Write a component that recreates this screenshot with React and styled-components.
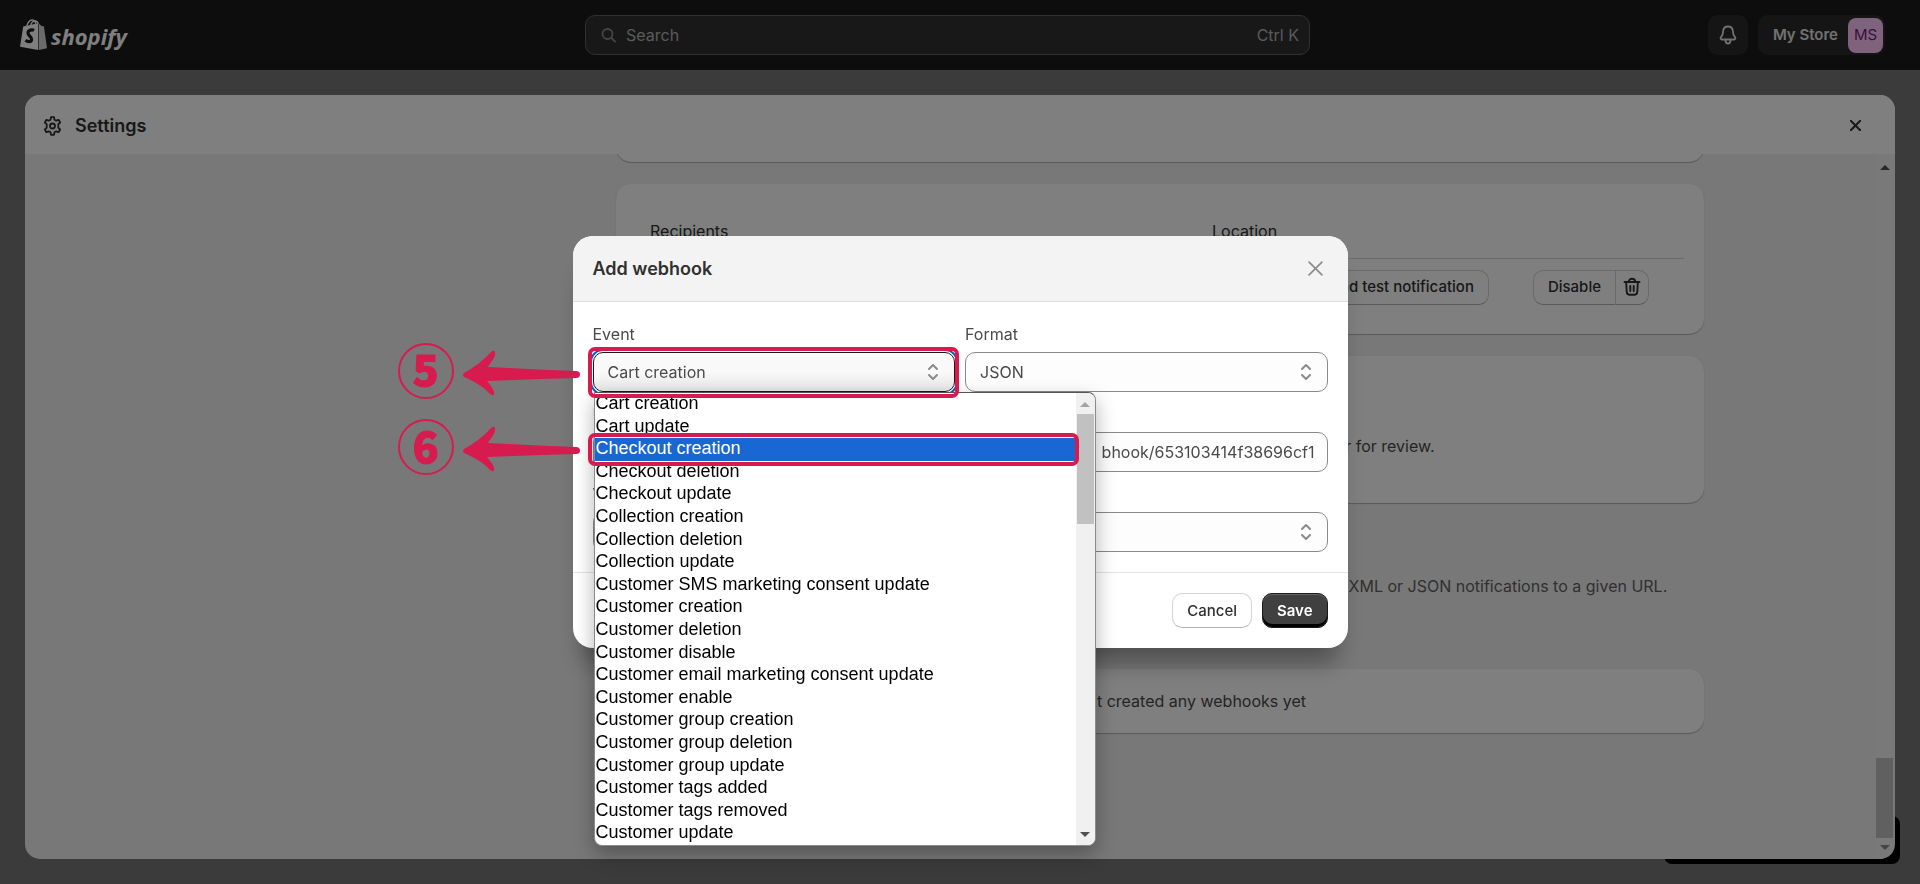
import React from "react";
import styled, { createGlobalStyle } from "styled-components";

const GlobalStyle = createGlobalStyle`
  *, *::before, *::after { box-sizing: border-box; }
  body {
    margin: 0;
    background: #767676;
    font-family: Inter, "Liberation Sans", sans-serif;
    font-size: 16px;
    line-height: 24px;
    color: #303030;
  }
  button, input, select { font: inherit; color: inherit; margin: 0; }
  ul, h1, h2, p { margin: 0; padding: 0; }
`;

const Screen = styled.div`
  display: flex;
  flex-direction: column;
  height: 100vh;
  overflow: hidden;
`;

/* ---------- top bar ---------- */

const TopBar = styled.header`
  display: grid;
  grid-template-columns: 1fr minmax(0, 725px) 1fr;
  column-gap: 24px;
  align-items: center;
  flex: none;
  height: 70px;
  padding: 0 35px 0 20px;
  background: #1a1a1a;
`;

const Brand = styled.a`
  display: flex;
  align-items: center;
  gap: 4px;
  color: #fff;
  text-decoration: none;
`;

const BrandName = styled.span`
  padding-top: 2px;
  font-family: "Open Sans", "Noto Sans", sans-serif;
  font-size: 22px;
  font-style: italic;
  font-weight: 700;
  line-height: 32px;
`;

const SearchBox = styled.label`
  display: flex;
  align-items: center;
  gap: 8px;
  height: 40px;
  margin: 0 5px 0 -5px;
  padding: 0 10px 0 14px;
  border: 1px solid #616161;
  border-radius: 10px;
  background: #303030;
  color: #b5b5b5;
`;

const SearchInput = styled.input`
  flex: 1;
  min-width: 0;
  padding: 0;
  border: 0;
  outline: 0;
  background: none;
  &::placeholder { color: #b5b5b5; opacity: 1; }
`;

const TopActions = styled.div`
  display: flex;
  justify-content: flex-end;
  gap: 10px;
`;

const TopButton = styled.button`
  display: flex;
  align-items: center;
  justify-content: center;
  gap: 10px;
  height: 40px;
  padding: ${(p) => (p.$wide ? "0 2px 0 15px" : "0")};
  width: ${(p) => (p.$wide ? "auto" : "40px")};
  border: 0;
  border-radius: 10px;
  background: #2b2b2b;
  color: #e3e3e3;
  font-size: 15px;
  font-weight: 600;
`;

const Avatar = styled.span`
  display: grid;
  place-items: center;
  width: 35px;
  height: 35px;
  border-radius: 8px;
  background: #ffc4f7;
  color: #721e7d;
  font-weight: 400;
`;

/* ---------- settings panel ---------- */

const PanelArea = styled.div`
  position: relative;
  flex: 1;
  min-height: 0;
  padding: 25px;
`;

const SaveBar = styled.div`
  position: absolute;
  right: 20px;
  bottom: 20px;
  width: 236px;
  height: 48px;
  border-radius: 8px;
  background: #000;
`;

const Panel = styled.section`
  position: relative;
  display: flex;
  flex-direction: column;
  height: 100%;
  overflow: hidden;
  border-radius: 15px;
  background: #f1f1f1;
`;

const PanelHeader = styled.div`
  display: flex;
  align-items: center;
  gap: 13px;
  flex: none;
  height: 59px;
  padding: 2px 34px 0 18px;
  background: #fff;
`;

const PanelTitle = styled.h1`
  flex: 1;
  font-size: 18px;
  font-weight: 600;
  line-height: 24px;
`;

const IconButton = styled.button`
  display: grid;
  place-items: center;
  padding: ${(p) => (p.$muted ? "5px" : "0")};
  border: 0;
  background: none;
  color: ${(p) => (p.$muted ? "#8a8a8a" : "#303030")};
`;

const PanelBody = styled.div`
  display: flex;
  flex: 1;
  min-height: 0;
`;

const Scroller = styled.div`
  flex: 1;
  min-width: 0;
  overflow: hidden;
`;

const Columns = styled.div`
  display: grid;
  grid-template-columns: 400px minmax(0, 1fr);
  column-gap: 19px;
  max-width: 1507px;
  margin: 0 auto;
`;

const Main = styled.main`
  grid-column: 2;
  display: flex;
  flex-direction: column;
  gap: 22px;
  margin-top: -52px;
`;

const Card = styled.div`
  min-height: 60px;
  padding: 20px;
  border-radius: 15px;
  background: #fff;
  box-shadow: 0 1px 1px rgba(0, 0, 0, 0.25), 0 0 1px rgba(0, 0, 0, 0.15);
`;

const CenteredCard = styled(Card)`
  display: flex;
  flex-direction: column;
  justify-content: center;
  height: ${(p) => (p.$tall ? "147px" : "64px")};
  padding-top: ${(p) => (p.$tall ? "52px" : "20px")};
  text-align: center;
  color: #4a4a4a;
`;

const Intro = styled.p`
  padding: 49px 17px;
  color: #616161;
  white-space: nowrap;
`;

const Table = styled.table`
  width: 100%;
  border-collapse: collapse;
  table-layout: fixed;
  th, td { padding: 0 14px; text-align: left; font-weight: 400; }
  th { height: 54px; border-bottom: 1px solid #d4d4d4; }
  th:first-child { width: 562px; }
  td { height: 56px; padding-top: 2px; }
`;

const RowActions = styled.div`
  display: flex;
  justify-content: flex-end;
  gap: 44px;
  padding-right: 21px;
`;

const ButtonPair = styled.div`
  display: flex;
  button + button { border-left: 1px solid #d4d4d4; border-radius: 0 10px 10px 0; }
  button:first-child:not(:last-child) { border-right: 0; border-radius: 10px 0 0 10px; }
`;

const Button = styled.button`
  display: grid;
  place-items: center;
  height: 35px;
  padding: ${(p) => (p.$icon ? "0 6px" : "0 14px")};
  border: 1px solid #d4d4d4;
  border-bottom-color: #b5b5b5;
  border-radius: 10px;
  background: #fff;
  font-size: 15px;
  font-weight: 500;
  line-height: 20px;
  white-space: nowrap;
`;

const PrimaryButton = styled(Button)`
  border-color: #1a1a1a;
  background: #404040;
  box-shadow: inset 0 -3px 0 #000, inset 0 1px 0 #666;
  color: #fff;
  font-weight: 600;
`;

/* ---------- scroll bars ---------- */

const Rail = styled.div`
  display: flex;
  flex-direction: column;
  align-items: center;
  flex: none;
  width: ${(p) => (p.$panel ? "17px" : "19px")};
  margin-right: ${(p) => (p.$panel ? "2px" : "0")};
  padding: ${(p) => (p.$panel ? "11px 0 9px" : "9px 0 8px")};
  background: ${(p) => (p.$panel ? "#f3f3f3" : "#f0f0f0")};
`;

const Thumb = styled.div`
  width: 17px;
  height: ${(p) => (p.$panel ? "80px" : "110px")};
  margin: ${(p) => (p.$panel ? "auto 0 7px" : "7px 0 auto")};
  background: #c1c1c1;
`;

const Tip = styled.span`
  width: 0;
  height: 0;
  border: 5px solid transparent;
  ${(p) =>
    p.$up
      ? `border-top: 0; border-bottom-color: ${p.$color};`
      : `border-bottom: 0; border-top-color: ${p.$color};`}
`;

/* ---------- dialog ---------- */

const Backdrop = styled.div`
  position: fixed;
  inset: 0;
  display: grid;
  place-items: center;
  background: rgba(0, 0, 0, 0.5);
`;

const Dialog = styled.form`
  width: min(775px, 100vw - 40px);
  border-radius: 20px;
  background: #fff;
  box-shadow: 0 25px 25px -10px rgba(0, 0, 0, 0.35);
`;

const DialogHeader = styled.div`
  display: flex;
  align-items: center;
  justify-content: space-between;
  height: 66px;
  padding: 0 20px;
  border-bottom: 1px solid #dedede;
  border-radius: 20px 20px 0 0;
  background: #f3f3f3;
`;

const DialogTitle = styled.h2`
  font-size: 18px;
  font-weight: 600;
  line-height: 24px;
`;

const Fields = styled.div`
  display: grid;
  grid-template-columns: 1fr 1fr;
  gap: 10px;
  padding: 20px;
`;

const Field = styled.div`
  position: relative;
  grid-column: ${(p) => (p.$full ? "1 / -1" : "auto")};
  display: flex;
  flex-direction: column;
  gap: 5px;
`;

const Label = styled.label`
  line-height: 25px;
  color: #4a4a4a;
`;

const Control = styled.div`
  position: relative;
  display: grid;
  > svg { position: absolute; right: 16px; top: 11px; pointer-events: none; }
`;

const Select = styled.select`
  appearance: none;
  height: 40px;
  padding: 0 14px;
  border: 1px solid ${(p) => (p.$open ? "#1a1a1a" : "#8a8a8a")};
  border-radius: 10px;
  outline: ${(p) => (p.$open ? "2px solid #005bd3" : "0")};
  outline-offset: 1px;
  background: ${(p) =>
    p.$open ? "linear-gradient(#f9f9f9 50%, #e6e6e6)" : "#fdfdfd"};
  color: #4a4a4a;
  opacity: 1;
`;

const TextInput = styled.input`
  height: 40px;
  padding: 0 12px;
  border: 1px solid #8a8a8a;
  border-radius: 10px;
  background: #fdfdfd;
  color: #4a4a4a;
  text-align: right;
`;

const DialogFooter = styled.div`
  display: flex;
  justify-content: flex-end;
  gap: 10px;
  padding: 20px;
  border-top: 1px solid #e3e3e3;
`;

/* ---------- open option list ---------- */

const Popup = styled.div`
  position: absolute;
  z-index: 1;
  top: 100%;
  left: 1px;
  display: flex;
  width: 502px;
  height: 454px;
  border: 1px solid #8a8a8a;
  border-top-color: #555;
  border-radius: 0 8px 8px 8px;
  background: #fff;
  box-shadow: 0 8px 20px rgba(0, 0, 0, 0.3);
  ${Rail} { border-radius: 0 8px 8px 0; }
`;

const Options = styled.ul`
  display: grid;
  grid-template-rows: repeat(20, 1fr);
  flex: 1;
  list-style: none;
  font-family: "Liberation Sans", Arial, sans-serif;
  font-size: 18px;
  line-height: 21px;
  color: #000;
`;

const Option = styled.li`
  padding-left: 1px;
  ${(p) => p.$active && "position: relative; background: #1967d2; color: #fff;"}
`;

/* ---------- tutorial marks ---------- */

const MARK = "#d81b4f";

const Frame = styled.div`
  position: absolute;
  z-index: 2;
  inset: ${(p) => p.$inset};
  border: 4px solid ${MARK};
  border-radius: 7px;
  pointer-events: none;
`;

const Step = styled.div`
  position: absolute;
  right: calc(100% + 12px);
  top: 50%;
  display: flex;
  align-items: center;
  gap: 9px;
  padding-bottom: 4px;
  transform: translateY(-50%);
  color: ${MARK};
`;

const StepNumber = styled.span`
  display: grid;
  place-items: center;
  width: 56px;
  height: 56px;
  padding-bottom: 7px;
  border: 2px solid ${MARK};
  border-radius: 50%;
  font-family: "Noto Sans CJK JP", "Noto Sans", sans-serif;
  font-size: 43px;
  font-weight: 900;
  line-height: 44px;
  -webkit-text-stroke: 1px ${MARK};
`;

/* ---------- drawings ---------- */

const BagIcon = () => (
  <svg width="27" height="32" viewBox="0 0 27 32" aria-hidden="true">
    <path d="M3.2 7.6 18 4.2l.2 26.9L0 27.7z" fill="#fff" />
    <path d="M18.6 4.2 21.5 7l2.4.3L27 29.2l-8.2 1.9z" fill="#d6d6d6" />
    <path
      d="M6.5 8C7.600 3.500 10 .9 12.300 1c2.500.1 3.500 2.800 3.500 5.200M10.600 7c.6-2.800 2.400-5 4.600-5 1.600 0 2.600 1.200 3 2.800"
      fill="none"
      stroke="#fff"
      strokeWidth="1.300"
    />
    <path
      d="M14 11.500c-1.600-1-6-.8-6 2.600 0 3 4 3.400 3.600 6.400-.3 2.800-3.600 2.800-6.100.8"
      fill="none"
      stroke="#1a1a1a"
      strokeWidth="3.200"
    />
  </svg>
);

const SearchIcon = () => (
  <svg width="18" height="18" viewBox="0 0 18 18" fill="none" stroke="#8a8a8a" strokeWidth="1.800" strokeLinecap="round" aria-hidden="true">
    <circle cx="7.500" cy="8" r="5" />
    <path d="m11.500 12 3.500 3.500" />
  </svg>
);

const BellIcon = () => (
  <svg width="18" height="20" viewBox="0 0 18 20" fill="none" stroke="#e3e3e3" strokeWidth="1.800" strokeLinejoin="round" strokeLinecap="round" aria-hidden="true">
    <path d="M9 1.500c-3 0-4.800 2.200-4.900 5-.1 3-.6 4.200-2.100 5.700-.8.900-.4 2.300.9 2.300h12.200c1.300 0 1.700-1.400.9-2.300-1.500-1.500-2-2.700-2.100-5.700-.1-2.800-1.900-5-4.900-5z" />
    <path d="M6.500 15c0 2.200 1 3.600 2.500 3.600s2.500-1.400 2.500-3.600" />
  </svg>
);

const GearIcon = () => (
  <svg width="19" height="20" viewBox="0 0 19 20" fill="none" stroke="#303030" strokeWidth="1.800" strokeLinejoin="round" aria-hidden="true">
    <path d="M8 1.200h3l.5 2.500 1.700 1 2.400-.9 1.600 2.700-1.900 1.700v3.600l1.900 1.700-1.600 2.700-2.400-.9-1.700 1-.5 2.500H8l-.5-2.500-1.700-1-2.400.9-1.600-2.700 1.900-1.700V8.200L1.800 6.500l1.600-2.700 2.400.9 1.700-1z" />
    <circle cx="9.500" cy="10" r="2.500" />
  </svg>
);

const CrossIcon = ({ size, width }) => (
  <svg width={size} height={size} viewBox="0 0 14 14" fill="none" stroke="currentColor" strokeWidth={width} strokeLinecap="round" aria-hidden="true">
    <path d="m1 1 12 12M13 1 1 13" />
  </svg>
);

const TrashIcon = () => (
  <svg width="20" height="20" viewBox="0 0 20 20" fill="none" stroke="#303030" strokeWidth="1.900" strokeLinecap="round" strokeLinejoin="round" aria-hidden="true">
    <path d="M2.500 5h15M6.800 5c0-2 1.200-3.200 3.200-3.200S13.200 3 13.200 5M4.200 5.200l.5 9.500c.1 2 1.200 3 3.200 3h4.200c2 0 3.100-1 3.200-3l.5-9.500M8.300 9v5M11.700 9v5" />
  </svg>
);

const UpDownIcon = () => (
  <svg width="12" height="18" viewBox="0 0 12 18" fill="none" stroke="#8a8a8a" strokeWidth="2" strokeLinecap="round" strokeLinejoin="round" aria-hidden="true">
    <path d="m2 6 4-4 4 4M2 12l4 4 4-4" />
  </svg>
);

const ArrowIcon = () => (
  <svg width="117" height="50" viewBox="0 0 117 50" fill="currentColor" aria-hidden="true">
    <path d="M1 27C10 22 20 15 27 7q4-4 5-1c1 5-4 10-7 15l61 3 27 1q4 0 4 3.500t-4 3.500l-35 1-54 2c3 4 6 7 7 11 1 4-2 4-5 1C20 40 10 35 1 31q-2-2 0-4z" />
  </svg>
);

/* ---------- data ---------- */

const EVENTS = [
  "Cart creation",
  "Cart update",
  "Checkout creation",
  "Checkout deletion",
  "Checkout update",
  "Collection creation",
  "Collection deletion",
  "Collection update",
  "Customer SMS marketing consent update",
  "Customer creation",
  "Customer deletion",
  "Customer disable",
  "Customer email marketing consent update",
  "Customer enable",
  "Customer group creation",
  "Customer group deletion",
  "Customer group update",
  "Customer tags added",
  "Customer tags removed",
  "Customer update",
];

const Marker = ({ number }) => (
  <Step>
    <StepNumber>{number}</StepNumber>
    <ArrowIcon />
  </Step>
);

function SelectField({ id, label, options, open, full, children }) {
  return (
    <Field $full={full}>
      <Label htmlFor={id}>{label}</Label>
      <Control>
        <Select id={id} $open={open} defaultValue={options[0]}>
          {options.map((o) => (
            <option key={o}>{o}</option>
          ))}
        </Select>
        <UpDownIcon />
        {children}
      </Control>
    </Field>
  );
}

function EventList() {
  return (
    <Popup>
      <Options role="listbox" aria-label="Event">
        {EVENTS.map((name) => {
          const active = name === "Checkout creation";
          return (
            <Option key={name} role="option" aria-selected={active} $active={active}>
              {name}
              {active && (
                <Frame $inset="-5px -3px -5px -7px">
                  <Marker number="6" />
                </Frame>
              )}
            </Option>
          );
        })}
      </Options>
      <Rail>
        <Tip $up $color="#a3a3a3" />
        <Thumb />
        <Tip $color="#505050" />
      </Rail>
    </Popup>
  );
}

function WebhookDialog() {
  return (
    <Backdrop>
      <Dialog role="dialog" aria-labelledby="dialog-title" onSubmit={(e) => e.preventDefault()}>
        <DialogHeader>
          <DialogTitle id="dialog-title">Add webhook</DialogTitle>
          <IconButton type="button" aria-label="Close dialog" $muted>
            <CrossIcon size="15" width="1.500" />
          </IconButton>
        </DialogHeader>
        <Fields>
          <SelectField id="event" label="Event" options={EVENTS} open>
            <EventList />
            <Frame $inset="-5px -4px -6px -5px">
              <Marker number="5" />
            </Frame>
          </SelectField>
          <SelectField id="format" label="Format" options={["JSON", "XML"]} />
          <Field $full>
            <Label htmlFor="url">URL</Label>
            <TextInput id="url" defaultValue="bhook/653103414f38696cf1" />
          </Field>
          <SelectField id="version" label="Version" options={["Latest"]} full />
        </Fields>
        <DialogFooter>
          <Button type="button">Cancel</Button>
          <PrimaryButton type="submit">Save</PrimaryButton>
        </DialogFooter>
      </Dialog>
    </Backdrop>
  );
}

export default function App() {
  return (
    <>
      <GlobalStyle />
      <Screen>
        <TopBar>
          <Brand href="#home">
            <BagIcon />
            <BrandName>shopify</BrandName>
          </Brand>
          <SearchBox>
            <SearchIcon />
            <SearchInput placeholder="Search" aria-label="Search" />
            <span>Ctrl K</span>
          </SearchBox>
          <TopActions>
            <TopButton aria-label="Notifications">
              <BellIcon />
            </TopButton>
            <TopButton $wide>
              My Store
              <Avatar>MS</Avatar>
            </TopButton>
          </TopActions>
        </TopBar>
        <PanelArea>
          <SaveBar />
          <Panel>
            <PanelHeader>
              <GearIcon />
              <PanelTitle>Settings</PanelTitle>
              <IconButton aria-label="Close settings">
                <CrossIcon size="11" width="2.500" />
              </IconButton>
            </PanelHeader>
            <PanelBody>
              <Scroller>
                <Columns>
                  <Main>
                    <Card />
                    <Card>
                      <Table>
                        <thead>
                          <tr>
                            <th>Recipients</th>
                            <th>Location</th>
                          </tr>
                        </thead>
                        <tbody>
                          <tr>
                            <td />
                            <td>
                              <RowActions>
                                <Button>Send test notification</Button>
                                <ButtonPair>
                                  <Button>Disable</Button>
                                  <Button $icon aria-label="Delete">
                                    <TrashIcon />
                                  </Button>
                                </ButtonPair>
                              </RowActions>
                            </td>
                          </tr>
                        </tbody>
                      </Table>
                    </Card>
                    <CenteredCard $tall>
                      <p>Recipients get notified when a customer submits a draft order for review.</p>
                    </CenteredCard>
                    <Intro>
                      You can subscribe to events for your products and orders by creating
                      webhooks that will push XML or JSON notifications to a given URL.
                    </Intro>
                    <CenteredCard>
                      <p>You haven’t created any webhooks yet</p>
                    </CenteredCard>
                  </Main>
                </Columns>
              </Scroller>
              <Rail $panel>
                <Tip $up $color="#505050" />
                <Thumb $panel />
                <Tip $color="#8a8a8a" />
              </Rail>
            </PanelBody>
          </Panel>
        </PanelArea>
      </Screen>
      <WebhookDialog />
    </>
  );
}
